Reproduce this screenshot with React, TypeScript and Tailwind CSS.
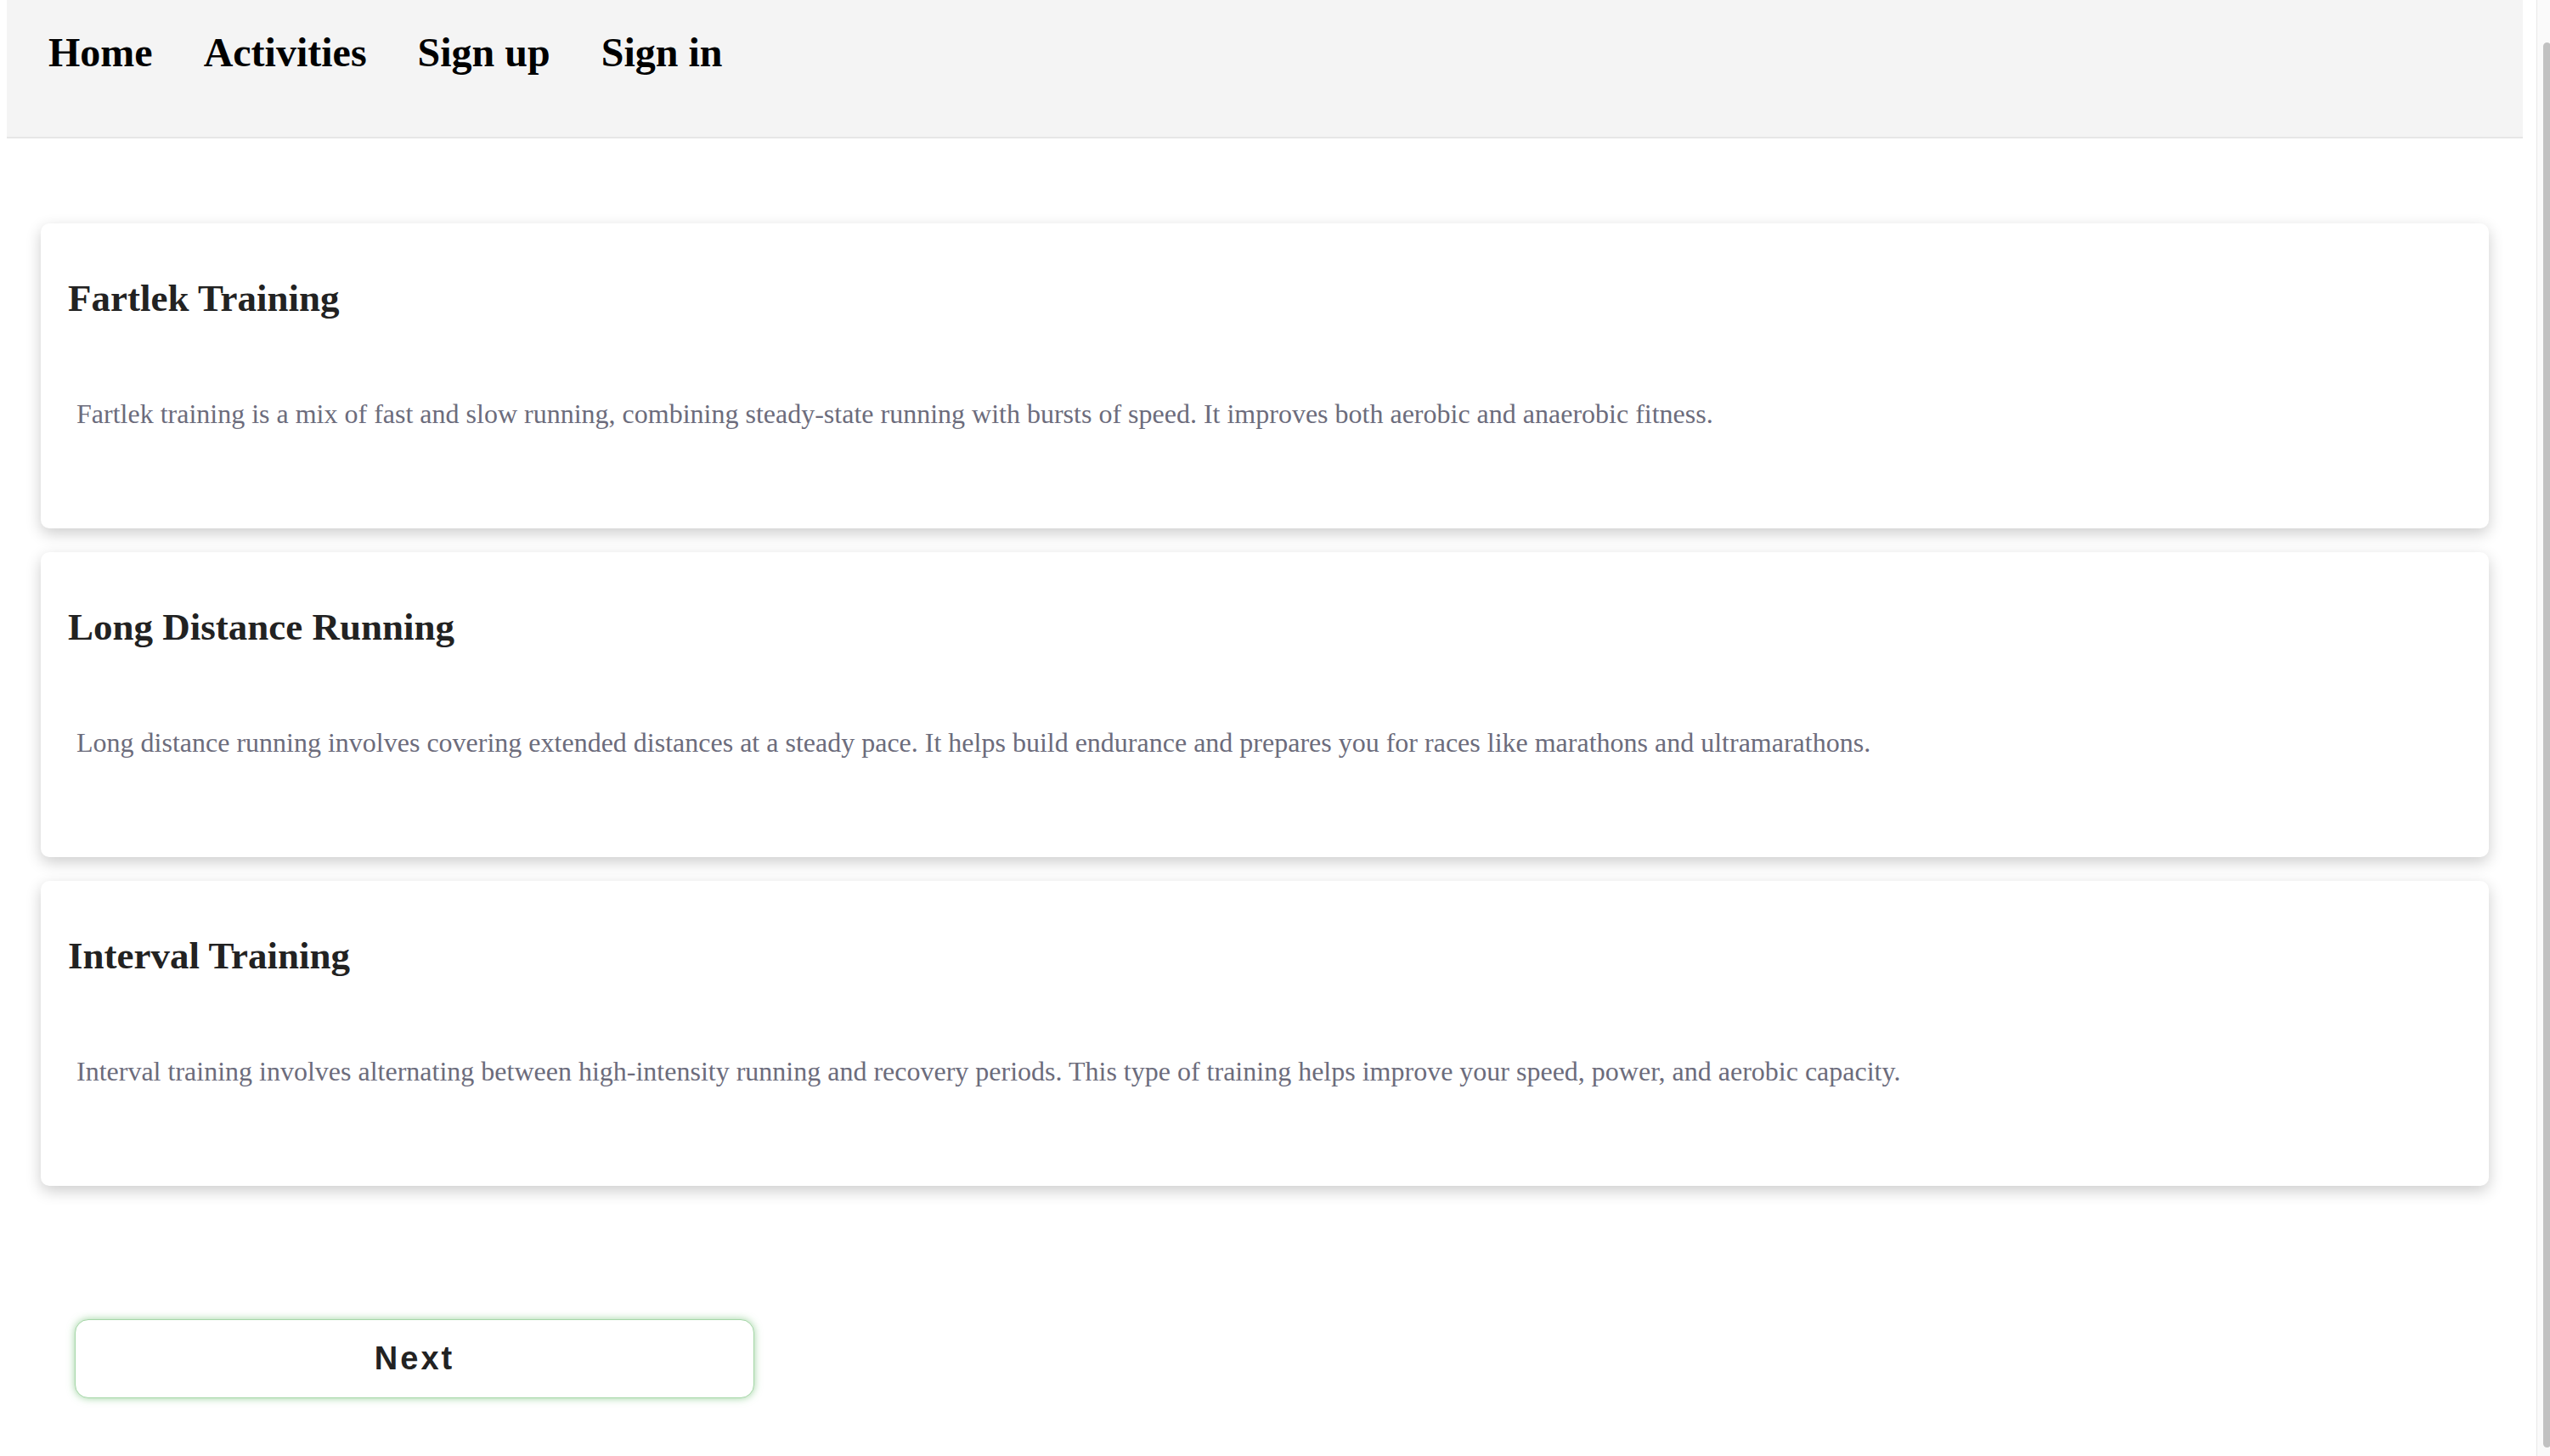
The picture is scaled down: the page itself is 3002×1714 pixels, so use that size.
const activities = [
  {
    title: 'Fartlek Training',
    text: 'Fartlek training is a mix of fast and slow running, combining steady-state running with bursts of speed. It improves both aerobic and anaerobic fitness.',
  },
  {
    title: 'Long Distance Running',
    text: 'Long distance running involves covering extended distances at a steady pace. It helps build endurance and prepares you for races like marathons and ultramarathons.',
  },
  {
    title: 'Interval Training',
    text: 'Interval training involves alternating between high-intensity running and recovery periods. This type of training helps improve your speed, power, and aerobic capacity.',
  },
]

const links = ['Home', 'Activities', 'Sign up', 'Sign in']

const Navbar = (): JSX.Element => {
  return (
    <nav className="h-[163px] border-b-2 border-[#e6e6e6] bg-[#f4f4f4] pl-[49px] pt-[38px]">
      <ul className="flex gap-[60px]">
        {links.map((l) => (
          <li key={l}>
            <a className="text-[48px] font-bold leading-none text-black">{l}</a>
          </li>
        ))}
      </ul>
    </nav>
  )
}

type CardProps = {
  title: string
  text: string
}

const ActivityCard = ({ title, text }: CardProps): JSX.Element => {
  return (
    <div className="flex h-[359px] flex-col rounded-[10px] bg-white pl-[32px] pt-[66px] shadow-[0_6px_18px_rgba(0,0,0,0.2)]">
      <h2 className="text-[45px] font-bold leading-none text-[#222]">{title}</h2>
      <p className="ml-[10px] mt-[97px] text-[32px] leading-none text-[#6c6c7c]">{text}</p>
    </div>
  )
}

export default function App() {
  return (
    <div className="flex h-screen overflow-hidden bg-white font-['Liberation_Serif','Times_New_Roman',serif]">
      <div className="flex-1 pl-[8px] pr-[16px]">
        <Navbar />
        <div className="flex flex-col gap-[28px] px-[40px] pt-[100px]">
          {activities.map((a) => (
            <ActivityCard key={a.title} title={a.title} text={a.text} />
          ))}
        </div>
        <div className="pl-[80px] pt-[157px]">
          <button className="h-[93px] w-[800px] rounded-[16px] border border-[#a5d6a7] bg-white font-['Liberation_Sans',Arial,sans-serif] text-[38px] font-bold tracking-[3px] text-[#222] shadow-[0_0_10px_rgba(76,175,80,0.55)]">
            Next
          </button>
        </div>
      </div>
      <div className="w-[16px] border-l border-[#e8e8e8] bg-[#fafafa]">
        <div className="ml-[7px] mt-[50px] h-[1654px] w-[9px] rounded-[5px] bg-[#c1c1c1]" />
      </div>
    </div>
  )
}
